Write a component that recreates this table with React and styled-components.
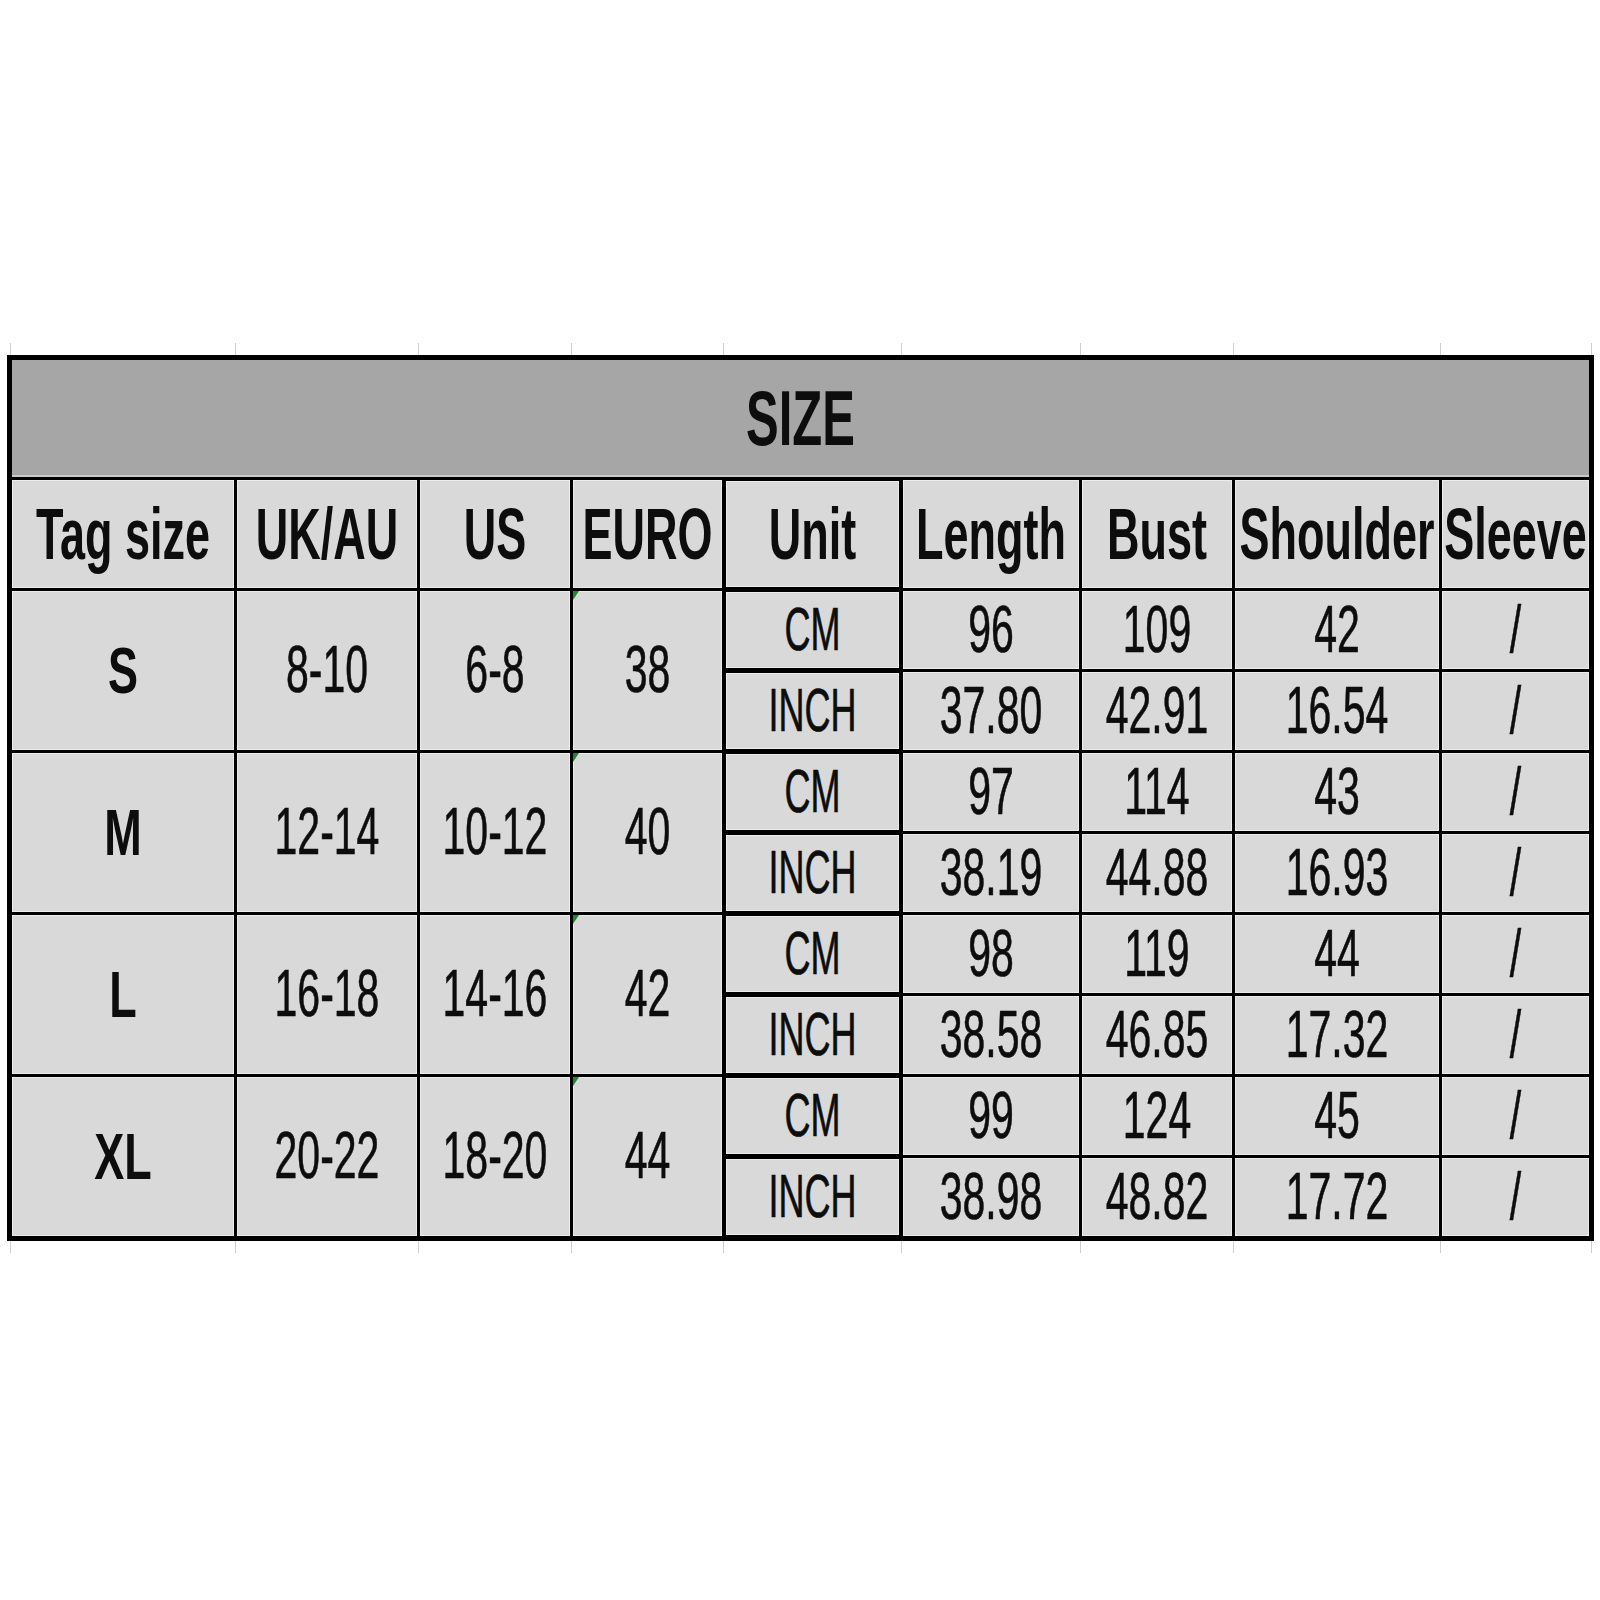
import React from 'react';
import styled, { createGlobalStyle } from 'styled-components';

const GlobalStyle = createGlobalStyle`
  html, body {
    margin: 0;
    padding: 0;
    background: #ffffff;
  }
  body {
    font-family: "Liberation Sans Narrow", "Liberation Sans", Arial, sans-serif;
    color: #111;
  }
`;

// column widths measured off the sheet, gaps are the 3px rules
const COLS = '222px 180px 150px 149px 175px 176px 150px 204px 147px';

const sizes = [
  { tag: 'S', uk: '8-10', us: '6-8', euro: '38', cm: ['96', '109', '42', '/'], inch: ['37.80', '42.91', '16.54', '/'] },
  { tag: 'M', uk: '12-14', us: '10-12', euro: '40', cm: ['97', '114', '43', '/'], inch: ['38.19', '44.88', '16.93', '/'] },
  { tag: 'L', uk: '16-18', us: '14-16', euro: '42', cm: ['98', '119', '44', '/'], inch: ['38.58', '46.85', '17.32', '/'] },
  { tag: 'XL', uk: '20-22', us: '18-20', euro: '44', cm: ['99', '124', '45', '/'], inch: ['38.98', '48.82', '17.72', '/'] },
];

const headers = ['Tag size', 'UK/AU', 'US', 'EURO', 'Unit', 'Length', 'Bust', 'Shoulder', 'Sleeve'];

export default function App() {
  return (
    <Page>
      <GlobalStyle />
      <TickRow>
        {headers.map((h, i) => <Tick key={i} $last={i === headers.length - 1} />)}
      </TickRow>
      <Table>
        <Title>
          <Stretch $size={49} $bold $sy={1.6}>SIZE</Stretch>
        </Title>
        {headers.map((h) => (
          <Cell key={h} $unit={h === 'Unit'}>
            <Stretch $size={45} $bold $sy={1.6}>{h}</Stretch>
          </Cell>
        ))}
        {sizes.map((s) => (
          <React.Fragment key={s.tag}>
            <Cell $span>
              <Stretch $size={45} $bold $sy={1.45}>{s.tag}</Stretch>
            </Cell>
            <Cell $span><Value>{s.uk}</Value></Cell>
            <Cell $span><Value>{s.us}</Value></Cell>
            <Cell $span $flag><Value>{s.euro}</Value></Cell>
            <Cell $unit><UnitText>CM</UnitText></Cell>
            {s.cm.map((v, i) => (
              <Cell key={'c' + i}><Value>{v}</Value></Cell>
            ))}
            <Cell $unit><UnitText>INCH</UnitText></Cell>
            {s.inch.map((v, i) => (
              <Cell key={'i' + i}><Value>{v}</Value></Cell>
            ))}
          </React.Fragment>
        ))}
      </Table>
      <TickRow>
        {headers.map((h, i) => <Tick key={i} $last={i === headers.length - 1} />)}
      </TickRow>
    </Page>
  );
}

const Page = styled.div`
  width: 1600px;
  height: 1600px;
  box-sizing: border-box;
  padding: 343px 6px 0 7px;
  display: flex;
  flex-direction: column;
`;

const TickRow = styled.div`
  display: grid;
  grid-template-columns: ${COLS};
  column-gap: 3px;
  padding: 0 5px;
  height: 12px;
`;

const Tick = styled.div`
  border-left: 1px solid #cfcfcf;
  margin-left: -2px;
  ${(p) => p.$last && 'border-right: 1px solid #cfcfcf; margin-right: -3px;'}
`;

const Table = styled.div`
  display: grid;
  grid-template-columns: ${COLS};
  grid-template-rows: 117px 108px repeat(8, 78px);
  gap: 3px;
  width: max-content;
  border: 5px solid #000;
  background: #000;
`;

const Title = styled.div`
  grid-column: 1 / -1;
  background: #a6a6a6;
  display: flex;
  align-items: center;
  justify-content: center;
  box-shadow: inset 0 -2px 0 #c9c9c9;
`;

const Cell = styled.div`
  position: relative;
  min-width: 0;
  background: #d9d9d9;
  display: flex;
  align-items: center;
  justify-content: center;
  white-space: nowrap;
  grid-row: ${(p) => (p.$span ? 'span 2' : 'auto')};
  box-shadow: ${(p) =>
    p.$unit
      ? 'inset 0 0 0 1px #000, inset 0 0 0 2px #ececec'
      : 'inset 0 0 0 1px #ececec'};

  ${(p) =>
    p.$flag &&
    `&::before {
      content: '';
      position: absolute;
      left: 0;
      top: 0;
      border-top: 9px solid #1f8a2c;
      border-right: 6px solid transparent;
    }`}
`;

const Stretch = styled.span`
  display: inline-block;
  font-size: ${(p) => p.$size}px;
  font-weight: ${(p) => (p.$bold ? 700 : 400)};
  line-height: 1;
  transform: scaleY(${(p) => p.$sy});
  color: #0d0d0d;
`;

const Value = styled.span`
  display: inline-block;
  font-size: 41px;
  line-height: 1;
  transform: scaleY(1.62);
  color: #0d0d0d;
  -webkit-text-stroke: 0.4px #0d0d0d;
`;

const UnitText = styled(Value)`
  font-size: 36px;
  transform: scaleY(1.68);
`;
